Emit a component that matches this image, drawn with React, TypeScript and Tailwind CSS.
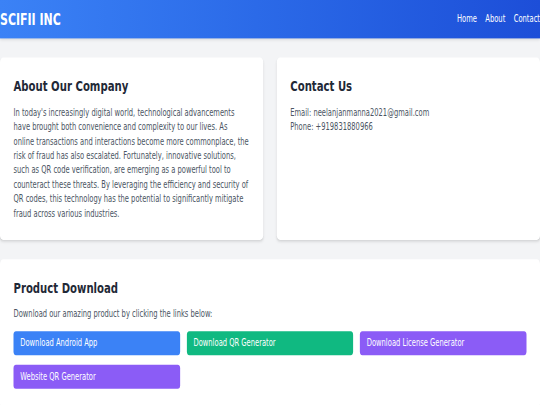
import React from "react";

export default function App() {
  return (
    <div className="w-[540px] h-[405px] overflow-hidden bg-[#f3f4f6]">
      <div
        className="w-[1280px] origin-top-left scale-x-[0.421875] scale-y-[0.6] bg-[#f3f4f6] text-base"
        style={{ fontFamily: '"DejaVu Sans", sans-serif' }}
      >
        <header className="bg-linear-to-r from-[#3b82f6] to-[#1d4ed8] text-white shadow-md">
          <div className="flex h-16 items-center justify-between">
            <h1 className="text-[26px] font-bold">SCIFII INC</h1>
            <nav className="flex gap-5">
              <a>Home</a>
              <a>About</a>
              <a>Contact</a>
            </nav>
          </div>
        </header>
        <main className="py-8">
          <div className="grid grid-cols-2 gap-8">
            <section className="rounded-lg bg-white p-8 shadow-md">
              <h2 className="mb-4 text-2xl font-bold text-[#1f2937]">About Our Company</h2>
              <p className="text-[#4b5563]">
                In today's increasingly digital world, technological advancements have brought both
                convenience and complexity to our lives. As online transactions and interactions become
                more commonplace, the risk of fraud has also escalated. Fortunately, innovative solutions,
                such as QR code verification, are emerging as a powerful tool to counteract these threats.
                By leveraging the efficiency and security of QR codes, this technology has the potential to
                significantly mitigate fraud across various industries.
              </p>
            </section>
            <section className="rounded-lg bg-white p-8 shadow-md">
              <h2 className="mb-4 text-2xl font-bold text-[#1f2937]">Contact Us</h2>
              <p className="text-[#4b5563]">Email: neelanjanmanna2021@gmail.com</p>
              <p className="text-[#4b5563]">Phone: +919831880966</p>
            </section>
          </div>
          <section className="mt-8 rounded-lg bg-white p-8 shadow-md">
            <h2 className="mb-4 text-2xl font-bold text-[#1f2937]">Product Download</h2>
            <p className="mb-4 text-[#4b5563]">Download our amazing product by clicking the links below:</p>
            <div className="grid grid-cols-3 gap-4">
              <a className="rounded-md bg-[#3b82f6] px-4 py-2 text-white">Download Android App</a>
              <a className="rounded-md bg-[#10b981] px-4 py-2 text-white">Download QR Generator</a>
              <a className="rounded-md bg-[#8b5cf6] px-4 py-2 text-white">Download License Generator</a>
              <a className="rounded-md bg-[#8b5cf6] px-4 py-2 text-white">Website QR Generator</a>
            </div>
          </section>
        </main>
      </div>
    </div>
  );
}
